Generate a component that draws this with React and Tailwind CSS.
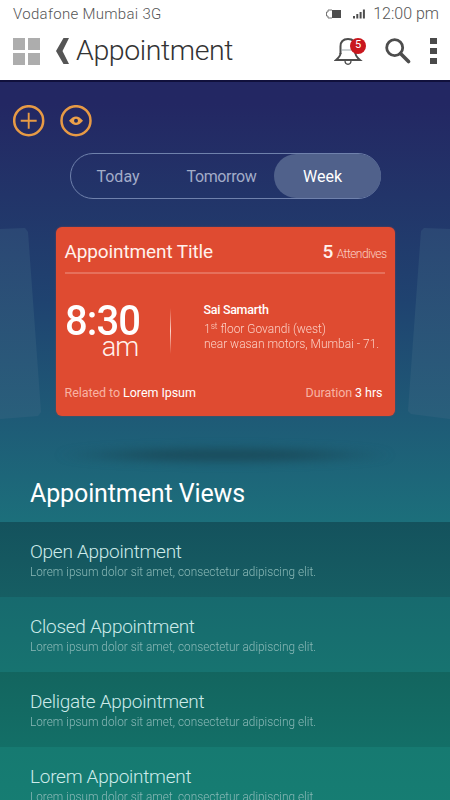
import React, { useState } from "react";

const views = [
  { title: "Open Appointment", bg: "bg-linear-to-b from-[#14525d] to-[#165e63]" },
  { title: "Closed Appointment", bg: "bg-linear-to-b from-[#176a6e] to-[#177370]" },
  { title: "Deligate Appointment", bg: "bg-linear-to-b from-[#13655f] to-[#136f67]" },
  { title: "Lorem Appointment", bg: "bg-linear-to-b from-[#167a71] to-[#167e73]" },
];

const tabs = [
  { name: "Today", size: "w-[94px]" },
  { name: "Tomorrow", size: "w-[109px] pl-1 tracking-[-0.35px]" },
  { name: "Week", size: "w-[107px]" },
];

const BatteryIcon = () => (
  <svg width="16" height="10" viewBox="0 0 16 10">
    <path d="M7 1H3v2H1.500v4H3v2h4" fill="none" stroke="#777" strokeWidth="1" />
    <rect x="7" y="1" width="9" height="8" fill="#4d4d4d" />
  </svg>
);

const SignalIcon = () => (
  <svg width="12" height="10" viewBox="0 0 12 10" fill="#4d4d4d">
    <rect x="0" y="7" width="2" height="2.500" />
    <rect x="3.300" y="5" width="2" height="4.500" />
    <rect x="6.600" y="3" width="2" height="6.500" />
    <rect x="9.900" y="0.500" width="2" height="9" />
  </svg>
);

const BellIcon = () => (
  <svg width="29" height="29" viewBox="0 0 29 29" fill="none" stroke="#4d4d4d">
    <path d="M6.500 17V9.500C6.500 5 9 2 14 2s7.500 3 7.500 7.500V17" strokeWidth="2" />
    <path d="M7 13h14" stroke="#9aa3a8" strokeWidth="1" />
    <path d="M6.500 16c0 3-2 5-4.500 7h24c-2.500-2-4.500-4-4.500-7" strokeWidth="1.900" />
    <path d="M11 23.500c0 5 6 5 6 0" strokeWidth="1.300" />
  </svg>
);

const SearchIcon = () => (
  <svg width="26" height="26" viewBox="0 0 26 26" fill="none" stroke="#4d4d4d">
    <circle cx="9.700" cy="9.700" r="8" strokeWidth="2.800" />
    <path d="M15.500 15.500l8 8" strokeWidth="3.600" strokeLinecap="round" />
  </svg>
);

const Header = () => (
  <header className="h-20 bg-white">
    <div className="flex h-7 items-center justify-between pl-[13px] pr-[11px] text-[15px] font-light text-[#555]">
      <span className="tracking-[0.3px]">Vodafone Mumbai 3G</span>
      <div className="flex items-center">
        <BatteryIcon />
        <span className="ml-3">
          <SignalIcon />
        </span>
        <span className="ml-2 text-base">12:00 pm</span>
      </div>
    </div>
    <div className="flex h-[46px] items-center px-[13px]">
      <div className="grid grid-cols-2 gap-[3px]">
        <i className="size-3 bg-[#adadad]" />
        <i className="size-3 bg-[#adadad]" />
        <i className="size-3 bg-[#adadad]" />
        <i className="size-3 bg-[#adadad]" />
      </div>
      <svg className="ml-4" width="14" height="26" viewBox="0 0 14 26">
        <path d="M7.500 0H13L6.500 13 13 26H7.500L0 13z" fill="#555" />
      </svg>
      <h1 className="ml-1.5 text-[28.500px] font-light leading-none tracking-[-0.4px] text-[#333]">Appointment</h1>
      <div className="ml-auto flex items-center">
        <div className="relative">
          <BellIcon />
          <span className="absolute left-4 top-px flex size-4 items-center justify-center rounded-full bg-[#c9171e] text-[11px] text-white">
            5
          </span>
        </div>
        <span className="ml-[22px]">
          <SearchIcon />
        </span>
        <div className="ml-[19px] flex flex-col gap-1">
          <i className="h-1.5 w-[7px] bg-[#4a4a4a]" />
          <i className="h-1.5 w-[7px] bg-[#4a4a4a]" />
          <i className="h-1.5 w-[7px] bg-[#4a4a4a]" />
        </div>
      </div>
    </div>
  </header>
);

const AppointmentCard = () => (
  <div className="flex h-[189px] w-[339px] flex-col rounded-md bg-[#df4b31] text-white shadow-[0_0_2px_#7d4550]">
    <div className="ml-[9px] mr-2.5 flex h-[47px] items-center justify-between border-b-2 border-[#e6705b]">
      <h2 className="mt-[5px] text-[19px] tracking-[-0.12px] text-[#fff1ec]">Appointment Title</h2>
      <p className="-mr-0.5 mt-[5px] whitespace-nowrap text-xs font-light tracking-[-0.55px] text-[#fbcfc4]">
        <b className="mr-1 text-[19px] font-medium text-[#fff1ec]">5</b>Attendives
      </p>
    </div>
    <div className="flex h-[96px] pl-[9px]">
      <div className="w-[76px] pt-[29px]">
        <div className="origin-left scale-x-93 whitespace-nowrap text-[43px] font-medium leading-[34px] tracking-[-1px]">
          8:30
        </div>
        <div className="-mt-0.5 pr-0.5 text-right text-[27px] font-light leading-6 tracking-[-0.8px] text-[#fff1ec]">
          am
        </div>
      </div>
      <div className="ml-[29px] mt-[34px] h-[46px] w-px bg-linear-to-b from-transparent via-[#fbd5cb] to-transparent" />
      <div className="ml-[33px] whitespace-nowrap pt-7 text-[13px] font-light leading-[15px] text-[#fbcfc4]">
        <p className="mb-1 text-[12.500px] font-medium tracking-[-0.3px] text-white">Sai Samarth</p>
        <p className="origin-left scale-x-92">
          1<sup className="text-[9px]">st</sup> floor Govandi (west)
        </p>
        <p className="origin-left scale-x-92">near wasan motors, Mumbai - 71.</p>
      </div>
    </div>
    <div className="flex justify-between pl-[9px] pr-3 pt-[14px] text-[12.500px] leading-[18px] tracking-[-0.06px] text-[#f8b3a4]">
      <p>
        Related to <span className="text-white">Lorem Ipsum</span>
      </p>
      <p>
        Duration <span className="text-white">3 hrs</span>
      </p>
    </div>
  </div>
);

const App = () => {
  const [active, setActive] = useState("Week");

  return (
    <div className="h-[800px] w-[450px] overflow-hidden bg-white font-['Roboto',sans-serif]">
      <Header />
      <main className="h-[720px] overflow-hidden">
        <section className="h-[442px] border-t-2 border-[#10103c] bg-linear-to-b from-[#232763] from-5% via-[#1f4370] to-[#1c6f7b]">
          {/* ROUND ACTIONS */}
          <div className="flex gap-4 pl-[13px] pt-[23px]">
            <button type="button">
              <svg className="block" width="32" height="32" viewBox="0 0 32 32" fill="none" stroke="#e79a45">
                <circle cx="15.700" cy="15.700" r="14.500" strokeWidth="2.500" />
                <path d="M15.700 7.700v16M7.700 15.700h16" strokeWidth="1.900" />
              </svg>
            </button>
            <button type="button" className="-ml-px">
              <svg className="block" width="32" height="32" viewBox="0 0 32 32">
                <circle cx="16" cy="15.700" r="14.500" fill="none" stroke="#e79a45" strokeWidth="2.500" />
                <path d="M9 15.700q7-8.500 14 0q-7 8.500-14 0z" fill="#eba04a" />
                <circle cx="16" cy="15.700" r="2" fill="#242c5c" />
              </svg>
            </button>
          </div>

          {/* TABS */}
          <div className="ml-[70px] mt-4 flex h-[46px] w-[311px] rounded-full border border-[#6f81ac]">
            {tabs.map((tab) => (
              <button
                key={tab.name}
                type="button"
                onClick={() => setActive(tab.name)}
                className={`${tab.size} shrink-0 rounded-full pt-0.5 text-base ${
                  active === tab.name ? "bg-[#50618b] pr-2.5 text-white" : "text-[#a2acc8]"
                }`}
              >
                {tab.name}
              </button>
            ))}
          </div>

          {/* CAROUSEL */}
          <div className="mt-7 flex justify-between">
            <div className="mt-px h-[191px] w-[42px] bg-linear-to-b from-[#2b4774] to-[#295f7b] [clip-path:polygon(0_1px,25px_0,28px_4px,41px_184px,38px_188px,0_191px)]" />
            <AppointmentCard />
            <div className="mt-px h-[191px] w-[42px] bg-linear-to-b from-[#2b4774] to-[#295f7b] [clip-path:polygon(42px_1px,16px_0,13px_3px,0_183px,3px_186px,42px_191px)]" />
          </div>
          <div className="mx-auto mt-[27px] h-[18px] w-[340px] bg-radial from-[#1a4c5c] from-30% to-transparent to-70% blur-[4px]" />

          <h2 className="ml-[30px] mt-3 text-[25px] leading-[36px] tracking-[-0.12px] text-white">
            Appointment Views
          </h2>
        </section>

        {/* APPOINTMENT VIEWS */}
        <ul>
          {views.map((view) => (
            <li key={view.title} className={`h-[75px] pl-[30px] pt-[18px] font-light ${view.bg}`}>
              <h3 className="text-[19px] leading-6 tracking-[-0.27px] text-[#cdebea]">{view.title}</h3>
              <p className="origin-left scale-x-91 text-[13px] leading-4 text-[#8bb9b7]">
                Lorem ipsum dolor sit amet, consectetur adipiscing elit.
              </p>
            </li>
          ))}
        </ul>
      </main>
    </div>
  );
};

export default App;
